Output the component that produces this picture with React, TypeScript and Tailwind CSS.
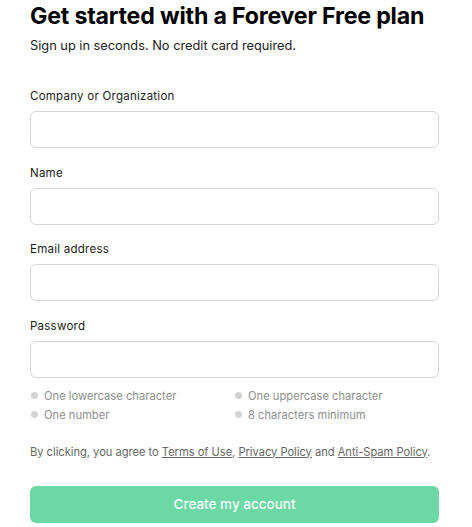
import React from 'react';

const fields = ['Company or Organization', 'Name', 'Email address', 'Password'];

const rules = ['One lowercase character', 'One uppercase character', 'One number', '8 characters minimum'];

export default function App() {
  return (
    <div className="min-h-screen bg-white px-[30px] pt-px text-[#111]" style={{ fontFamily: 'Inter, "Noto Sans", sans-serif' }}>
      <h1 className="text-[23.2px] font-bold leading-[30px] tracking-[-0.2px] whitespace-nowrap text-black">Get started with a Forever Free plan</h1>
      <p className="mt-[6px] text-[12.8px] leading-[18px] text-[#222]">Sign up in seconds. No credit card required.</p>

      <form className="mt-[33px] w-[409px]" onSubmit={(e) => e.preventDefault()}>
        {fields.map((label, i) => (
          <div key={label} className={i > 0 ? 'mt-[16.5px]' : ''}>
            <label className="block text-[11.5px] font-normal leading-[16px] tracking-[0.25px] text-[#1a1a1a]">{label}</label>
            <input
              type={label === 'Password' ? 'password' : 'text'}
              className="mt-[7px] block h-[37px] w-full rounded-[6px] border border-[#d4d4d4] bg-white px-3 text-[13px] outline-none"
            />
          </div>
        ))}

        <ul className="mt-[10px] grid grid-cols-2 gap-y-[3px] pl-px">
          {rules.map((r) => (
            <li key={r} className="flex items-center gap-[6px] text-[11.2px] leading-[16px] text-[#8f8f8f]">
              <span className="h-[7px] w-[7px] rounded-full bg-[#d3d3d3]" />
              {r}
            </li>
          ))}
        </ul>

        <p className="mt-[21px] whitespace-nowrap text-[11.1px] leading-[16px] text-[#666]">
          By clicking, you agree to <a className="underline" href="#">Terms of Use</a>,{' '}
          <a className="underline" href="#">Privacy Policy</a> and <a className="underline" href="#">Anti-Spam Policy</a>.
        </p>

        <button
          type="submit"
          className="mt-[26px] flex h-[37px] w-full items-center justify-center rounded-[6px] bg-[#6bd8a5] text-[13.5px] font-medium text-white"
        >
          Create my account
        </button>
      </form>
    </div>
  );
}
